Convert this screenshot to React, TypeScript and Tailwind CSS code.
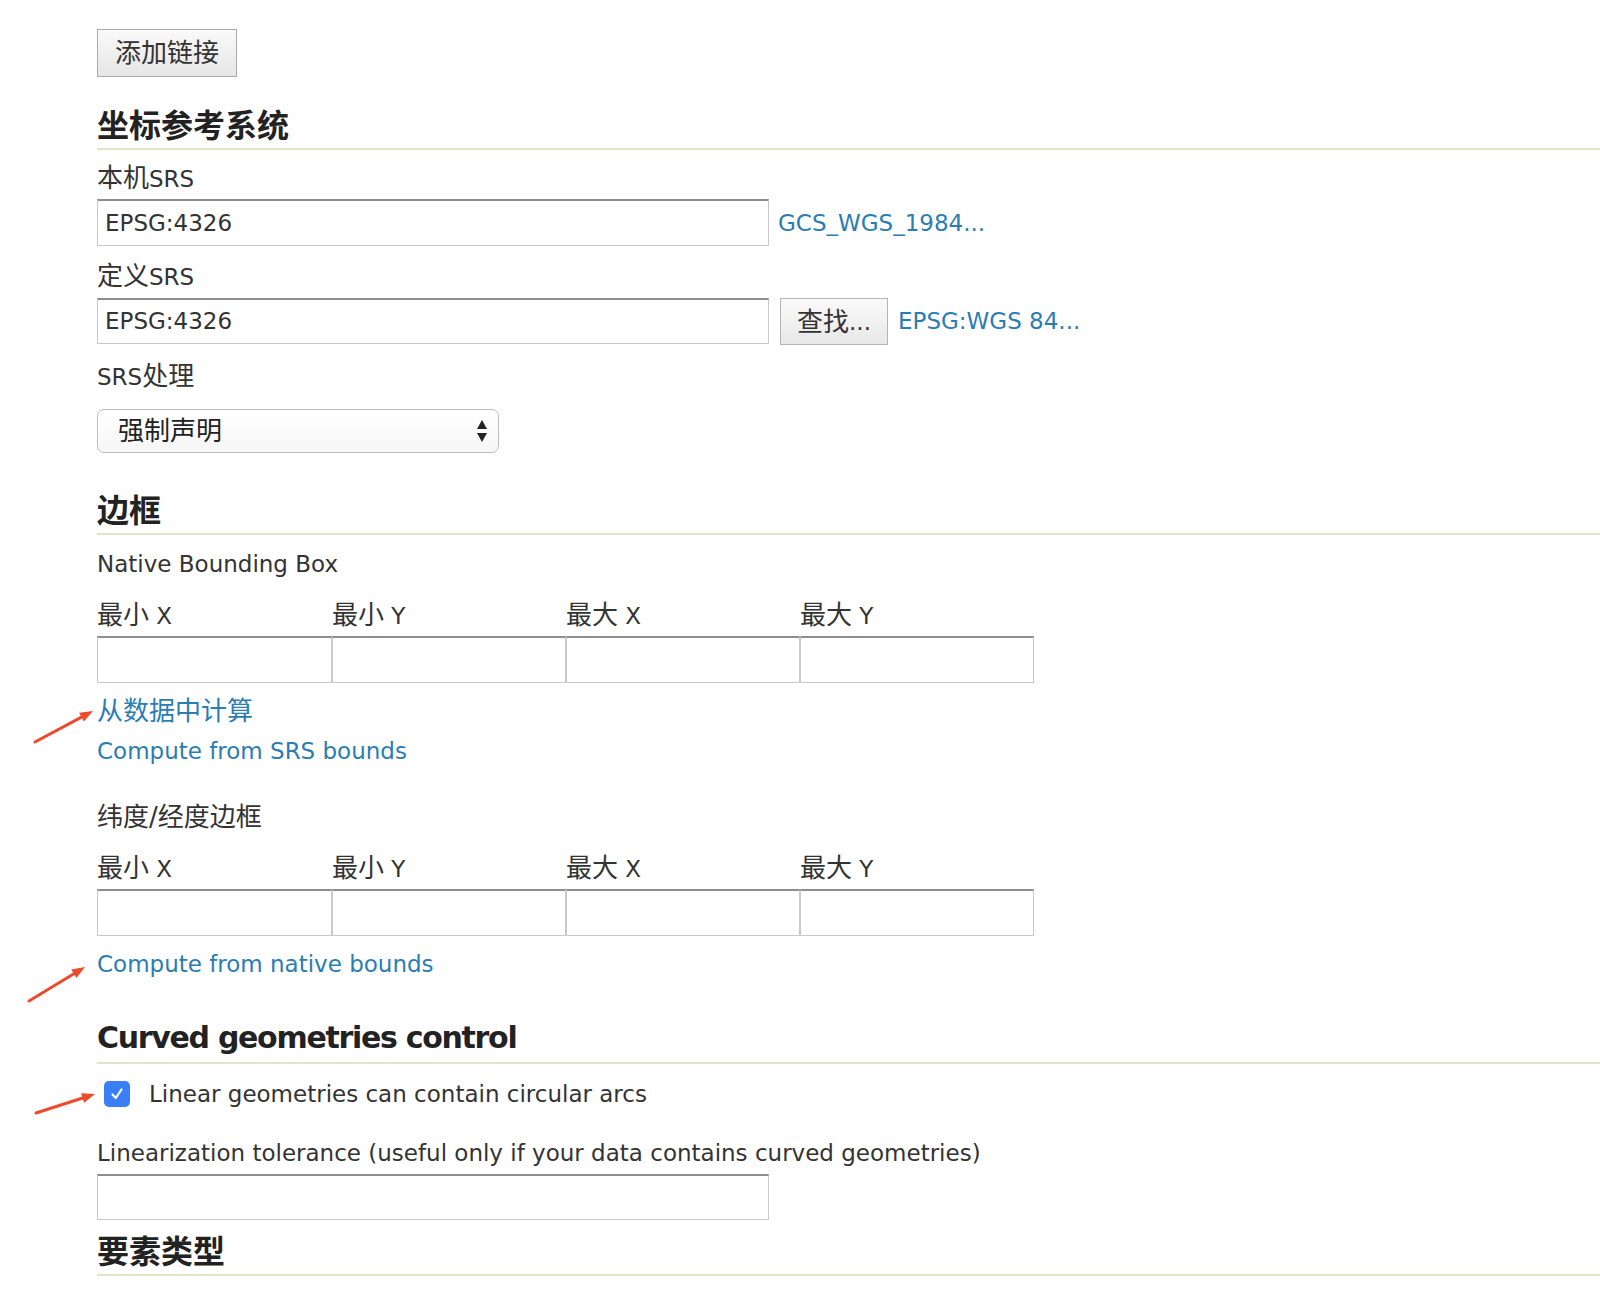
import React from "react";

const FONT = { fontFamily: '"DejaVu Sans", "Noto Sans CJK SC", sans-serif' };

function C({ children }: { children: React.ReactNode }) {
  return <span className="text-[26px] leading-[28px]">{children}</span>;
}

function TextInput({ value, className = "" }: { value?: string; className?: string }) {
  return (
    <div
      className={
        "flex items-center bg-white border border-[#c9c9c9] border-t-2 border-t-[#8e8e8e] pl-[7px] text-[23px] text-[#333] " +
        className
      }
    >
      {value}
    </div>
  );
}

function Heading({ children, className = "", latin = false }: { children: React.ReactNode; className?: string; latin?: boolean }) {
  return (
    <div
      className={
        "w-full font-bold text-[#222] border-b-2 border-[#dde6c9] leading-[36px] " +
        (latin ? "text-[30px] tracking-[-1.3px] h-[44px] pb-[6px] " : "text-[32px] h-[42px] pb-[4px] ") +
        className
      }
    >
      {children}
    </div>
  );
}

function Label({ children, className = "" }: { children: React.ReactNode; className?: string }) {
  return <div className={"h-[28px] text-[23px] leading-[28px] text-[#333] whitespace-nowrap " + className}>{children}</div>;
}

function LinkText({ children, className = "" }: { children: React.ReactNode; className?: string }) {
  return <div className={"h-[28px] text-[23px] leading-[28px] text-[#2a7db3] whitespace-nowrap " + className}>{children}</div>;
}

function BBox({ top }: { top: string }) {
  const labels: [string, string][] = [
    ["最小", " X"],
    ["最小", " Y"],
    ["最大", " X"],
    ["最大", " Y"],
  ];
  return (
    <>
      <div className={"grid grid-cols-[235px_234px_234px_234px] w-[937px] " + top}>
        {labels.map(([a, b]) => (
          <Label key={a + b}>
            <C>{a}</C>
            {b}
          </Label>
        ))}
      </div>
      <div className="grid grid-cols-[235px_234px_234px_234px] w-[937px] mt-[7px]">
        {labels.map(([a, b]) => (
          <TextInput key={a + b} className="h-[47px]" />
        ))}
      </div>
    </>
  );
}

function Arrow({ x1, y1, x2, y2 }: { x1: number; y1: number; x2: number; y2: number }) {
  const dx = x2 - x1;
  const dy = y2 - y1;
  const len = Math.sqrt(dx * dx + dy * dy);
  const ux = dx / len;
  const uy = dy / len;
  const hl = 13;
  const hw = 5;
  const bx = x2 - ux * hl;
  const by = y2 - uy * hl;
  const p1 = `${bx - uy * hw},${by + ux * hw}`;
  const p2 = `${bx + uy * hw},${by - ux * hw}`;
  return (
    <g>
      <line x1={x1} y1={y1} x2={bx} y2={by} stroke="#ec4a2a" strokeWidth={3} strokeLinecap="round" />
      <polygon points={`${x2},${y2} ${p1} ${p2}`} fill="#ec4a2a" />
    </g>
  );
}

export default function App() {
  return (
    <div className="relative w-[1600px] min-h-[1289px] bg-white overflow-hidden" style={FONT}>
      <div className="flex flex-col pl-[97px] pt-[29px]">
        <button className="w-[140px] h-[48px] border border-[#a9a9a9] bg-gradient-to-b from-[#fafafa] to-[#e6e6e6] text-[26px] text-[#333] flex items-center justify-center">
          添加链接
        </button>

        <Heading className="mt-[31px]">坐标参考系统</Heading>

        <Label className="mt-[14px]">
          <C>本机</C>SRS
        </Label>
        <div className="flex items-center mt-[7px]">
          <TextInput value="EPSG:4326" className="w-[672px] h-[47px]" />
          <LinkText className="ml-[9px]">GCS_WGS_1984...</LinkText>
        </div>

        <Label className="mt-[16px]">
          <C>定义</C>SRS
        </Label>
        <div className="flex items-start mt-[8px]">
          <TextInput value="EPSG:4326" className="w-[672px] h-[46px]" />
          <button className="ml-[11px] w-[108px] h-[47px] border border-[#b4b4b4] bg-gradient-to-b from-[#fafafa] to-[#e8e8e8] text-[23px] leading-[28px] text-[#333] flex items-center justify-center">
            <C>查找</C>...
          </button>
          <LinkText className="ml-[10px] mt-[9px]">EPSG:WGS 84...</LinkText>
        </div>

        <Label className="mt-[17px]">
          SRS<C>处理</C>
        </Label>
        <div className="mt-[19px] w-[402px] h-[44px] rounded-[7px] border border-[#bdbdbd] bg-gradient-to-b from-white to-[#f6f6f6] flex items-center justify-between pl-[20px] pr-[10px] text-[26px] leading-[28px] text-[#222]">
          <span>强制声明</span>
          <svg width="12" height="24" viewBox="0 0 12 24">
            <polygon points="6,1 11,10 1,10" fill="#222" />
            <polygon points="1,14 11,14 6,23" fill="#222" />
          </svg>
        </div>

        <Heading className="mt-[40px]">边框</Heading>

        <Label className="mt-[15px]">Native Bounding Box</Label>
        <BBox top="mt-[23px]" />

        <LinkText className="mt-[14px]">
          <C>从数据中计算</C>
        </LinkText>
        <LinkText className="mt-[12px]">Compute from SRS bounds</LinkText>

        <Label className="mt-[38px]">
          <C>纬度/经度边框</C>
        </Label>
        <BBox top="mt-[23px]" />

        <LinkText className="mt-[14px]">Compute from native bounds</LinkText>

        <Heading latin className="mt-[42px]">Curved geometries control</Heading>

        <div className="flex items-center mt-[16px] h-[28px]">
          <div className="ml-[7px] w-[26px] h-[26px] rounded-[5px] bg-[#3a7ff6] flex items-center justify-center">
            <svg width="16" height="16" viewBox="0 0 16 16">
              <path d="M3.5 8.5 L6.8 12 L12.5 3.5" stroke="white" strokeWidth="2.2" fill="none" strokeLinecap="round" strokeLinejoin="round" />
            </svg>
          </div>
          <span className="ml-[19px] text-[23px] leading-[28px] text-[#333]">Linear geometries can contain circular arcs</span>
        </div>

        <Label className="mt-[31px]">Linearization tolerance (useful only if your data contains curved geometries)</Label>
        <TextInput className="mt-[7px] w-[672px] h-[46px]" />

        <Heading className="mt-[14px]">要素类型</Heading>
      </div>

      <svg className="absolute left-0 top-0 pointer-events-none" width="1600" height="1289">
        <Arrow x1={35} y1={742} x2={93} y2={711} />
        <Arrow x1={29} y1={1001} x2={85} y2={967} />
        <Arrow x1={36} y1={1113} x2={95} y2={1094} />
      </svg>
    </div>
  );
}
